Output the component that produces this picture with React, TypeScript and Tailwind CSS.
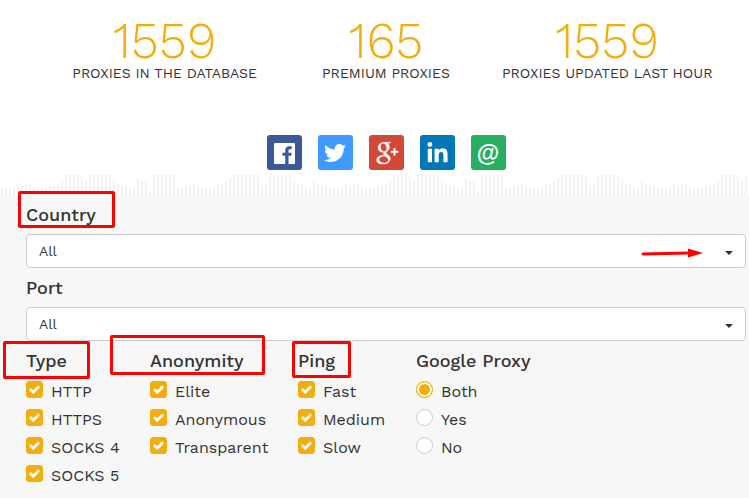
import React, { useState } from 'react';
import { FaLinkedinIn, FaTwitter } from 'react-icons/fa';
import { TiSocialGooglePlus } from 'react-icons/ti';

const stats = [
  { value: '1559', label: 'PROXIES IN THE DATABASE' },
  { value: '165', label: 'PREMIUM PROXIES' },
  { value: '1559', label: 'PROXIES UPDATED LAST HOUR' },
];

// heights of the equalizer bars, one every 4px
const bars = [
  7, 7, 7, 9, 12, 9, 10, 11, 9, 7, 7, 7, 9, 10, 11, 14, 20, 20, 20, 20, 18, 15, 20, 20, 20, 20, 20, 20,
  14, 11, 10, 9, 7, 9, 16, 14, 13, 3, 20, 20, 20, 20, 20, 20, 7, 7, 9, 10, 11, 9, 7, 7, 7, 9, 10, 11,
  14, 17, 20, 20, 20, 20, 20, 20, 20, 7, 11, 20, 20, 20, 20, 20, 20, 14, 11, 10, 9, 7, 14, 11, 10, 9,
];

const FacebookIcon = () => (
  <svg viewBox="128 128 1536 1536" className="w-[21px] h-[21px] mt-0.5" fill="currentColor">
    <path d="M1579 128q35 0 60 25t25 60v1366q0 35-25 60t-60 25h-391v-595h199l30-232h-229v-148q0-56 23.5-84t91.5-28l122-1v-207q-63-9-178-9-136 0-217.5 80t-81.5 226v171h-200v232h200v595h-735q-35 0-60-25t-25-60v-1366q0-35 25-60t60-25h1366z" />
  </svg>
);

const AtSign = () => <span className="text-[23px] leading-8 font-bold font-['Liberation_Sans',sans-serif]">@</span>;

const socials = [
  { name: 'Facebook', color: 'bg-[#3b5998]', icon: <FacebookIcon /> },
  { name: 'Twitter', color: 'bg-[#4099ff]', icon: <FaTwitter size={22} /> },
  {
    name: 'Google+',
    color: 'bg-[#d34836]',
    icon: <TiSocialGooglePlus size={35} stroke="currentColor" strokeWidth={0.3} />,
  },
  { name: 'LinkedIn', color: 'bg-[#0177b5]', icon: <FaLinkedinIn size={23} className="mt-0.5" /> },
  { name: 'Email', color: 'bg-[#27ae60]', icon: <AtSign /> },
];

const Equalizer = () => (
  <svg className="block w-full h-5" aria-hidden="true">
    <defs>
      <pattern id="bars" width="328" height="20" patternUnits="userSpaceOnUse">
        {bars.map((h, i) => (
          <rect key={i} x={i * 4 + 1} y={20 - h} width="2" height={h} fill="#f2f2f2" />
        ))}
      </pattern>
    </defs>
    <rect width="100%" height="20" fill="url(#bars)" />
  </svg>
);

const Mark = ({ className }: { className: string }) => (
  <span className={`absolute border-3 border-[#ff0000] rounded-xs pointer-events-none ${className}`} />
);

const Arrow = () => (
  <svg viewBox="0 0 62 10" className="absolute right-[43px] top-[14px] w-[62px] h-[10px] pointer-events-none">
    <path d="M2 6L48 5" stroke="#ff0000" strokeWidth="3" strokeLinecap="round" />
    <path d="M47 0.500L62 5L47 9.500Z" fill="#ff0000" />
  </svg>
);

type SelectProps = { id: string; label: string; mark?: React.ReactNode; arrow?: boolean };

const SelectField = ({ id, label, mark, arrow }: SelectProps) => (
  <div>
    <label htmlFor={id} className="relative block w-fit text-lg leading-[39px] font-medium">
      {label}
      {mark}
    </label>
    <div className="relative">
      <select
        id={id}
        className="block w-full h-[34px] px-3 appearance-none bg-white border border-[#cccccc] rounded text-sm"
      >
        <option>All</option>
      </select>
      {arrow && <Arrow />}
      <svg viewBox="0 0 8 4" className="absolute right-[13px] top-[17px] w-2 h-1 pointer-events-none" fill="#333333">
        <path d="M0 0h8L4 4z" />
      </svg>
    </div>
  </div>
);

const CheckGroup = ({ title, items, mark }: { title: string; items: string[]; mark?: React.ReactNode }) => (
  <fieldset>
    <legend className="relative text-lg leading-[39px] font-medium">
      {title}
      {mark}
    </legend>
    {items.map((item) => (
      <label key={item} className="flex items-start gap-2 h-7 leading-6">
        <span className="relative mt-px h-[17px]">
          <input
            type="checkbox"
            defaultChecked
            className="peer block w-[17px] h-[17px] appearance-none rounded-[3px] border border-[#cccccc] bg-white checked:bg-[#f4ad0a] checked:border-[#f4ad0a]"
          />
          <svg
            viewBox="0 0 17 17"
            className="absolute inset-0 w-[17px] h-[17px] hidden peer-checked:block pointer-events-none"
            fill="none"
            stroke="white"
            strokeWidth="2.800"
          >
            <path d="M4 8L7.300 11.200L13 5.300" />
          </svg>
        </span>
        {item}
      </label>
    ))}
  </fieldset>
);

const App: React.FC = () => {
  const [google, setGoogle] = useState('Both');

  return (
    <div className="min-h-screen flex flex-col bg-white text-[#333333] font-['Work_Sans','Inter',sans-serif]">
      <div className="pl-[26px] pr-[3px]">
        <div className="grid grid-cols-3 px-7 pt-4 text-center">
          {stats.map((stat) => (
            <div key={stat.label}>
              <div className="text-[50px] leading-[49px] font-light text-[#f4ad0a]">{stat.value}</div>
              <div className="text-sm leading-4 whitespace-nowrap">{stat.label}</div>
            </div>
          ))}
        </div>
        <div className="flex justify-center gap-4 pt-[54px]">
          {socials.map((social) => (
            <a
              key={social.name}
              href="#"
              aria-label={social.name}
              className={`flex items-center justify-center w-[35px] h-[35px] rounded-[3px] text-white ${social.color}`}
            >
              {social.icon}
            </a>
          ))}
        </div>
      </div>
      <div className="pt-[5px]">
        <Equalizer />
      </div>

      <form className="flex-1 bg-[#f7f7f7] pl-[26px] pr-[3px]">
        <SelectField
          id="country"
          label="Country"
          arrow
          mark={<Mark className="-left-2 w-[97px] -top-1 h-[37px]" />}
        />
        <SelectField id="port" label="Port" />
        <div className="flex">
          <div className="w-[124px]">
            <CheckGroup
              title="Type"
              items={['HTTP', 'HTTPS', 'SOCKS 4', 'SOCKS 5']}
              mark={<Mark className="-left-[23px] w-[87px] top-0 h-[38px]" />}
            />
          </div>
          <div className="w-[148px]">
            <CheckGroup
              title="Anonymity"
              items={['Elite', 'Anonymous', 'Transparent']}
              mark={<Mark className="-left-10 w-[155px] -top-1.5 h-10" />}
            />
          </div>
          <div className="w-[118px]">
            <CheckGroup
              title="Ping"
              items={['Fast', 'Medium', 'Slow']}
              mark={<Mark className="-left-1.5 w-[59px] top-0 h-[37px]" />}
            />
          </div>
          <fieldset>
            <legend className="text-lg leading-[39px] font-medium">Google Proxy</legend>
            {['Both', 'Yes', 'No'].map((item) => (
              <label key={item} className="flex items-start gap-2 h-7 leading-6">
                <input
                  type="radio"
                  name="google"
                  checked={google === item}
                  onChange={() => setGoogle(item)}
                  className="mt-px w-[17px] h-[17px] appearance-none rounded-full border border-[#cccccc] bg-white checked:border-[#f4ad0a] checked:bg-[#f4ad0a] checked:shadow-[inset_0_0_0_2px_white]"
                />
                {item}
              </label>
            ))}
          </fieldset>
        </div>
      </form>
    </div>
  );
};

export default App;
